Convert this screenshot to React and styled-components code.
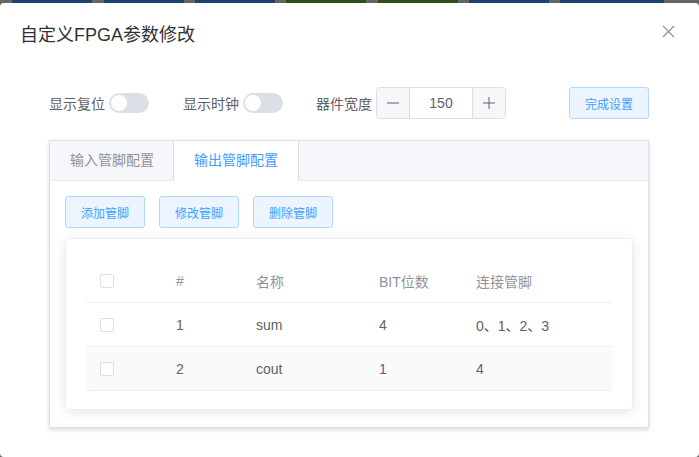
import React from "react";
import styled, { createGlobalStyle } from "styled-components";

const GlobalStyle = createGlobalStyle`
    html, body {
        margin: 0;
        padding: 0;
        background: #5f5f5f;
        font-family: "Liberation Sans", "Noto Sans CJK SC", sans-serif;
    }
    * {
        box-sizing: border-box;
    }
`;

const Page = styled.div`
    width: 699px;
    height: 457px;
    display: flex;
    flex-direction: column;
    overflow: hidden;
    background: #666;
`;

const Strip = styled.div`
    display: flex;
    height: 3px;
    flex-shrink: 0;
`;

const Segment = styled.div`
    width: ${(p) => p.w}px;
    background: ${(p) => p.color};
`;

const Dialog = styled.div`
    flex: 1;
    background: #fff;
    border-radius: 4px;
    display: flex;
    flex-direction: column;
`;

const Header = styled.div`
    display: flex;
    justify-content: space-between;
    align-items: flex-start;
    padding: 20px 20px 10px;
    h3 {
        margin: 0;
        font-size: 18px;
        line-height: 24px;
        font-weight: 400;
        color: #303133;
    }
`;

const CloseBtn = styled.div`
    width: 16px;
    height: 16px;
    margin-right: 3px;
    display: flex;
    align-items: center;
    justify-content: center;
`;

const Body = styled.div`
    padding: 30px 0 0 49px;
`;

const Content = styled.div`
    width: 600px;
    display: flex;
    flex-direction: column;
    gap: 21px;
`;

const Toolbar = styled.div`
    display: flex;
    align-items: center;
    height: 32px;
`;

const Field = styled.div`
    display: flex;
    align-items: center;
    gap: 4px;
    margin-right: ${(p) => p.mr || 0}px;
    font-size: 14px;
    color: #606266;
`;

const Switch = styled.div`
    width: 40px;
    height: 20px;
    border-radius: 10px;
    background: #dcdfe6;
    position: relative;
    &::after {
        content: "";
        position: absolute;
        top: 2px;
        left: 2px;
        width: 16px;
        height: 16px;
        border-radius: 50%;
        background: #fff;
    }
`;

const NumberInput = styled.div`
    width: 130px;
    height: 32px;
    border: 1px solid #dcdfe6;
    border-radius: 4px;
    display: flex;
    overflow: hidden;
`;

const Stepper = styled.div`
    width: 33px;
    background: #f5f7fa;
    color: #606266;
    display: flex;
    align-items: center;
    justify-content: center;
    border-${(p) => (p.side === "left" ? "right" : "left")}: 1px solid #dcdfe6;
`;

const NumberValue = styled.div`
    flex: 1;
    display: flex;
    align-items: center;
    justify-content: center;
    font-size: 14px;
    color: #606266;
`;

const PlainButton = styled.button`
    width: 80px;
    height: 32px;
    margin-left: ${(p) => p.ml || 0}px;
    padding: 0;
    font-family: inherit;
    font-size: 12px;
    color: #409eff;
    background: #ecf5ff;
    border: 1px solid #b3d8ff;
    border-radius: 3px;
`;

const Tabs = styled.div`
    border: 1px solid #dcdfe6;
    background: #fff;
    box-shadow: 0 2px 4px rgba(0, 0, 0, 0.12), 0 0 6px rgba(0, 0, 0, 0.04);
`;

const TabBar = styled.div`
    display: flex;
    height: 40px;
    background: #f5f7fa;
    border-bottom: 1px solid #e4e7ed;
`;

const Tab = styled.div`
    padding: ${(p) => (p.active ? "0 20px" : "0 19px 0 20px")};
    height: ${(p) => (p.active ? 40 : 39)}px;
    line-height: 39px;
    font-size: 14px;
    color: ${(p) => (p.active ? "#409eff" : "#909399")};
    background: ${(p) => (p.active ? "#fff" : "transparent")};
    border-left: ${(p) => (p.active ? "1px solid #dcdfe6" : "none")};
    border-right: ${(p) => (p.active ? "1px solid #dcdfe6" : "none")};
`;

const TabPane = styled.div`
    padding: 15px 15px 17px;
    display: flex;
    flex-direction: column;
    gap: 10px;
`;

const ButtonRow = styled.div`
    display: flex;
    gap: 14px;
`;

const Card = styled.div`
    padding: 20px 20px 18px;
    border: 1px solid #ebeef5;
    border-radius: 4px;
    box-shadow: 0 2px 12px 0 rgba(0, 0, 0, 0.1);
`;

const Table = styled.div`
    display: flex;
    flex-direction: column;
`;

const Row = styled.div`
    display: grid;
    grid-template-columns: 80px 80px 123px 97px 1fr;
    height: 44px;
    align-items: center;
    border-bottom: 1px solid #ebeef5;
    background: ${(p) => (p.striped ? "#fafafa" : "#fff")};
    font-size: 14px;
    color: ${(p) => (p.head ? "#909399" : "#606266")};
`;

const Cell = styled.div`
    padding-left: ${(p) => (p.check ? 14 : 10)}px;
    display: flex;
    align-items: center;
`;

const Checkbox = styled.span`
    width: 14px;
    height: 14px;
    border: 1px solid #dcdfe6;
    border-radius: 2px;
    background: #fff;
`;

const segments = [
    [12, "#666"], [80, "#1d436c"], [12, "#666"], [80, "#1d436c"], [11, "#666"],
    [80, "#1d436c"], [11, "#666"], [80, "#2d4f1b"], [12, "#666"], [80, "#2d4f1b"],
    [11, "#666"], [80, "#1d436c"], [11, "#666"], [104, "#1d436c"], [35, "#666"],
];

const rows = [
    { id: 1, name: "sum", bits: "4", pins: "0、1、2、3" },
    { id: 2, name: "cout", bits: "1", pins: "4" },
];

const App = () => {
    return (
        <Page>
            <GlobalStyle />
            <Strip>
                {segments.map(([w, c], i) => (
                    <Segment key={i} w={w} color={c} />
                ))}
            </Strip>
            <Dialog>
                <Header>
                    <h3>自定义FPGA参数修改</h3>
                    <CloseBtn>
                        <svg width="13" height="13" viewBox="0 0 13 13">
                            <path d="M1 1 L12 12 M12 1 L1 12" stroke="#909399" strokeWidth="1.2" />
                        </svg>
                    </CloseBtn>
                </Header>
                <Body>
                    <Content>
                        <Toolbar>
                            <Field mr={34}>
                                显示复位
                                <Switch />
                            </Field>
                            <Field mr={33}>
                                显示时钟
                                <Switch />
                            </Field>
                            <Field>
                                器件宽度
                                <NumberInput>
                                    <Stepper side="left">
                                        <svg width="12" height="12" viewBox="0 0 12 12">
                                            <path d="M0 6 H12" stroke="#606266" strokeWidth="1" />
                                        </svg>
                                    </Stepper>
                                    <NumberValue>150</NumberValue>
                                    <Stepper side="right">
                                        <svg width="12" height="12" viewBox="0 0 12 12">
                                            <path d="M0 6 H12 M6 0 V12" stroke="#606266" strokeWidth="1" />
                                        </svg>
                                    </Stepper>
                                </NumberInput>
                            </Field>
                            <PlainButton ml={63}>完成设置</PlainButton>
                        </Toolbar>

                        <Tabs>
                            <TabBar>
                                <Tab>输入管脚配置</Tab>
                                <Tab active>输出管脚配置</Tab>
                            </TabBar>
                            <TabPane>
                                <ButtonRow>
                                    <PlainButton>添加管脚</PlainButton>
                                    <PlainButton>修改管脚</PlainButton>
                                    <PlainButton>删除管脚</PlainButton>
                                </ButtonRow>
                                <Card>
                                    <Table>
                                        <Row head>
                                            <Cell check><Checkbox /></Cell>
                                            <Cell>#</Cell>
                                            <Cell>名称</Cell>
                                            <Cell>BIT位数</Cell>
                                            <Cell>连接管脚</Cell>
                                        </Row>
                                        {rows.map((r, i) => (
                                            <Row key={r.id} striped={i % 2 === 1}>
                                                <Cell check><Checkbox /></Cell>
                                                <Cell>{r.id}</Cell>
                                                <Cell>{r.name}</Cell>
                                                <Cell>{r.bits}</Cell>
                                                <Cell>{r.pins}</Cell>
                                            </Row>
                                        ))}
                                    </Table>
                                </Card>
                            </TabPane>
                        </Tabs>
                    </Content>
                </Body>
            </Dialog>
        </Page>
    );
};

export default App;
